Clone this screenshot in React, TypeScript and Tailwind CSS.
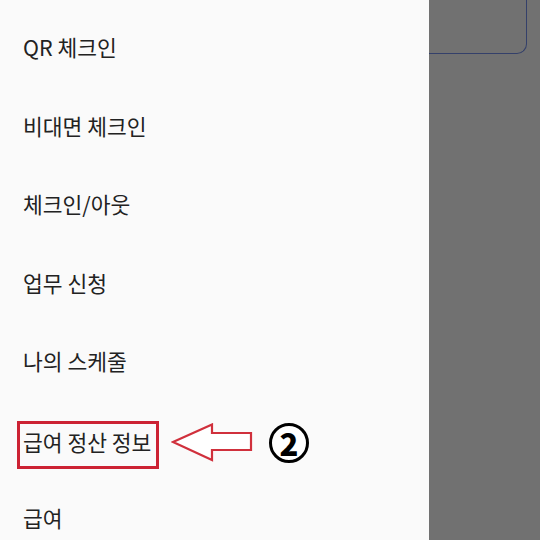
import React from "react";

const menu = ["QR 체크인", "비대면 체크인", "체크인/아웃", "업무 신청", "나의 스케줄", "급여 정산 정보", "급여"];

function MenuRow({ label, highlight }: { label: string; highlight?: boolean }) {
  if (!highlight) {
    return (
      <div className="h-[78.5px] flex items-center pl-[23px] text-[21.5px] leading-[30px] text-[#222222]">
        {label}
      </div>
    );
  }
  return (
    <div className="h-[78.5px] pl-[17px] pt-[20px] relative">
      <div className="w-[142px] h-[48px] border-[3px] border-[#cc2233] pl-[3px] pt-[3px] text-[21.5px] leading-[30px] text-[#222222]">
        {label}
      </div>
      {/* annotation overlay */}
      <div className="absolute left-[171px] top-[22px] flex items-center gap-[14px]">
        <svg width="84" height="40" viewBox="0 0 84 40">
          <path
            d="M2 19 L41 1.5 L41 10 L80 10 L80 27 L41 27 L41 37 Z"
            fill="#ffffff"
            stroke="#d0303c"
            strokeWidth="2.2"
            strokeLinejoin="miter"
          />
        </svg>
        <div className="w-[40px] h-[40px] rounded-full border-[3.5px] border-black flex items-center justify-center text-[31px] font-black leading-none text-black bg-white">
          2
        </div>
      </div>
    </div>
  );
}

export default function App() {
  return (
    <div
      className="w-[540px] h-[540px] flex overflow-hidden"
      style={{ fontFamily: '"Noto Sans CJK KR", "Noto Sans", sans-serif' }}
    >
      <div className="w-[429px] shrink-0 bg-[#fafafa] pt-[8px]">
        {menu.map((m) => (
          <MenuRow key={m} label={m} highlight={m === "급여 정산 정보"} />
        ))}
      </div>
      <div className="flex-1 bg-[#717171] pr-[13px]">
        <div className="h-[54px] border-r-[1.5px] border-b-[1.5px] border-[#34406a] rounded-br-[10px]" />
      </div>
    </div>
  );
}
